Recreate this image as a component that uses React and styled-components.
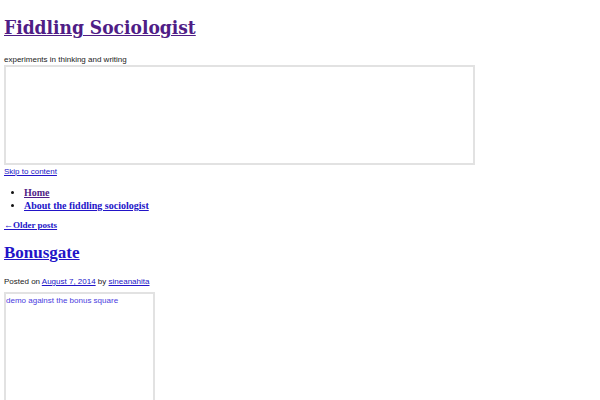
import React from 'react';
import styled, { createGlobalStyle } from 'styled-components';

const GlobalStyle = createGlobalStyle`
    html, body {
        margin: 0;
        padding: 0;
        background: #fff;
    }
    body {
        font-family: "Liberation Sans", Arial, sans-serif;
        color: #222;
    }
`;

const Page = styled.div`
    padding: 0 4px;
    width: 592px;
    height: 400px;
    overflow: hidden;
`;

const Masthead = styled.header`
    display: flex;
    flex-direction: column;
`;

const SiteTitle = styled.h1`
    margin: 14px 0 0;
    font-family: "DejaVu Serif Condensed", "DejaVu Serif", serif;
    font-size: 19px;
    line-height: 26px;
    font-weight: 700;

    a {
        color: #4f1d86;
        text-decoration: underline;
        text-decoration-thickness: 1px;
    }
`;

const Tagline = styled.p`
    margin: 15px 0 0;
    font-size: 8px;
    line-height: 10px;
    color: #222;
`;

const Frame = styled.div`
    box-sizing: border-box;
    width: ${p => p.$w}px;
    height: ${p => p.$h}px;
    border: 2px solid #e2e2e2;
    padding: 2px 0 0 0;
    font-size: 8px;
    line-height: 10px;
    color: #4a3be0;
`;

const SmallLink = styled.a`
    display: block;
    font-size: 8px;
    line-height: 12px;
    margin-top: ${p => p.$mt || 0}px;
    color: #2214c8;
    text-decoration: underline;
`;

const Nav = styled.ul`
    margin: 8px 0 0;
    padding-left: 20px;
    font-family: "Liberation Serif", "DejaVu Serif", serif;
    font-size: 10px;
    line-height: 13px;
    font-weight: 700;

    li::marker {
        color: #111;
    }
`;

const NavLink = styled.a`
    color: ${p => (p.$visited ? '#4f1d86' : '#2214c8')};
    text-decoration: underline;
`;

const PagerLink = styled.a`
    display: block;
    margin-top: 7px;
    font-family: "Liberation Serif", "DejaVu Serif", serif;
    font-size: 9px;
    line-height: 12px;
    font-weight: 700;
    color: #2214c8;
    text-decoration: underline;
`;

const PostTitle = styled.h2`
    margin: 11px 0 0;
    font-family: "Liberation Serif", "DejaVu Serif", serif;
    font-size: 17px;
    line-height: 22px;
    font-weight: 700;

    a {
        color: #2214c8;
        text-decoration: underline;
        text-decoration-thickness: 1px;
    }
`;

const Meta = styled.p`
    margin: 12px 0 0;
    font-size: 8px;
    line-height: 12px;
    color: #222;

    a {
        color: #2214c8;
        text-decoration: underline;
    }
`;

const Article = styled.article`
    display: flex;
    flex-direction: column;
`;

const ImageBox = styled(Frame)`
    margin-top: 4px;
`;

export default function App() {
    return (
        <>
            <GlobalStyle />
            <Page>
                <Masthead>
                    <SiteTitle><a href="#">Fiddling Sociologist</a></SiteTitle>
                    <Tagline>experiments in thinking and writing</Tagline>
                    <Frame $w={471} $h={100} />
                    <SmallLink href="#" $mt={1}>Skip to content</SmallLink>
                    <Nav>
                        <li><NavLink href="#" $visited>Home</NavLink></li>
                        <li><NavLink href="#">About the fiddling sociologist</NavLink></li>
                    </Nav>
                </Masthead>
                <PagerLink href="#">←Older posts</PagerLink>
                <Article>
                    <PostTitle><a href="#">Bonusgate</a></PostTitle>
                    <Meta>
                        Posted on <a href="#">August 7, 2014</a> by <a href="#">sineanahita</a>
                    </Meta>
                    <ImageBox $w={151} $h={140}>demo against the bonus square</ImageBox>
                </Article>
            </Page>
        </>
    );
}
